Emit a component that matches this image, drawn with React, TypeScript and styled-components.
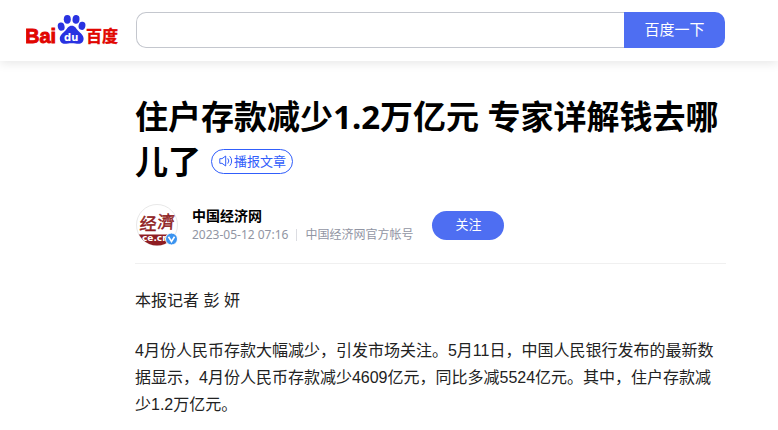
import React from "react";
import styled, { createGlobalStyle } from "styled-components";

const GlobalStyle = createGlobalStyle`
  *, *::before, *::after { box-sizing: border-box; }
  body {
    margin: 0;
    background: #fff;
    color: #222;
    font-family: "Liberation Sans", "Noto Sans CJK SC", sans-serif;
  }
`;

const Header = styled.header`
  display: flex;
  align-items: center;
  height: 61px;
  padding: 0 53px 2px 26px;
  background: #fff;
  box-shadow: 0 2px 10px rgba(0, 0, 0, 0.1);
`;

const LogoLink = styled.a`
  display: block;
  flex: none;
  width: 110px;
  height: 32px;
`;

const SearchForm = styled.form`
  display: flex;
  flex: 1;
  height: 36px;
`;

const SearchInput = styled.input`
  flex: 1;
  min-width: 0;
  padding: 0 12px;
  border: 1px solid #c4c7ce;
  border-right: 0;
  border-radius: 10px 0 0 10px;
  background: #fff;
  font: 16px "Liberation Sans", "Noto Sans CJK SC", sans-serif;
  outline: none;
`;

const SearchButton = styled.button`
  width: 101px;
  padding: 0 0 2px;
  border: 0;
  border-radius: 0 10px 10px 0;
  background: #4e6ef2;
  color: #fff;
  font: 15px "Noto Sans CJK SC", sans-serif;
`;

const Article = styled.main`
  padding: 33px 52px 0 135px;
`;

const Heading = styled.div`
  font: bold 33px/45px "Noto Sans", "Noto Sans CJK SC", sans-serif;
`;

const Title = styled.h1`
  display: inline;
  margin: 0;
  color: #000;
  font: inherit;
`;

const ListenButton = styled.button`
  display: inline-flex;
  align-items: center;
  gap: 1px;
  height: 25px;
  margin: 0 0 6px 10px;
  padding: 0 6px 1px 7px;
  border: 1px solid #315efb;
  border-radius: 13px;
  background: #fff;
  color: #315efb;
  font: 13px/22px "Noto Sans CJK SC", sans-serif;
  vertical-align: middle;
`;

const Byline = styled.section`
  display: flex;
  align-items: center;
  height: 80px;
  padding-top: 3px;
  border-bottom: 1px solid #f0f0f0;
`;

const Avatar = styled.svg`
  flex: none;
  width: 44px;
  height: 42px;
`;

const AuthorInfo = styled.div`
  margin: 0 19px 0 13px;
`;

const AuthorName = styled.a`
  display: block;
  color: #000;
  font: bold 14px/19px "Noto Sans CJK SC", sans-serif;
  text-decoration: none;
`;

const Meta = styled.div`
  display: flex;
  align-items: center;
  color: #9195a3;
  font: 12px/19px "Noto Sans", "Noto Sans CJK SC", sans-serif;
`;

const Account = styled.span`
  margin-left: 8px;
  padding-left: 8px;
  border-left: 1px solid #dcdde2;
  line-height: 12px;
`;

const FollowButton = styled.button`
  width: 72px;
  height: 29px;
  padding: 0 0 3px;
  border: 0;
  border-radius: 15px;
  background: #4e6ef2;
  color: #fff;
  font: 13px "Noto Sans CJK SC", sans-serif;
`;

const Paragraph = styled.p`
  margin: 23px 0 0;
  color: #222;
  font-size: 16px;
  line-height: 27px;
`;

const Logo = () => (
  <svg width="94" height="32" viewBox="26 13 94 32" aria-hidden="true">
    <g fill="#e10601" stroke="#e10601" fontWeight="bold">
      <text x="25" y="42" fontSize="20" fontFamily="Liberation Sans, sans-serif" strokeWidth=".9">Bai</text>
      <text x="86" y="41" fontSize="16" fontFamily="Noto Sans CJK SC, sans-serif" strokeWidth=".4">百度</text>
    </g>
    <g fill="#2932e1">
      <ellipse cx="61.2" cy="25.6" rx="3.4" ry="4.1" transform="rotate(-12 61.2 25.6)" />
      <ellipse cx="67.3" cy="18.3" rx="3.5" ry="4.4" />
      <ellipse cx="76" cy="18.3" rx="3.5" ry="4.4" transform="rotate(6 76 18.3)" />
      <ellipse cx="82" cy="24.8" rx="3.4" ry="4.1" transform="rotate(12 82 24.8)" />
      <path d="M71.700 24.800c3.400 0 4.200 2.600 6.400 5 2.300 2.400 5.500 4.100 5.500 8 0 3-2.200 5-5 5-2.400 0-4.200-.6-6.900-.6s-4.500.6-6.900.6c-2.800 0-5-2-5-5 0-3.900 3.200-5.600 5.500-8 2.200-2.400 3-5 6.400-5Z" />
    </g>
    <text x="64" y="40" fontSize="10" fontWeight="bold" fill="#fff" fontFamily="DejaVu Sans, sans-serif">du</text>
  </svg>
);

const SpeakerIcon = () => (
  <svg width="14" height="14" viewBox="0 0 14 14" fill="none" stroke="currentColor" strokeLinecap="round" strokeLinejoin="round" aria-hidden="true">
    <path d="M1.200 4.700h1.800L6.700 2v10L3 9.300H1.200Z" />
    <path d="M9 4.700a3.500 3.500 0 0 1 0 4.600M11 2.500a6.500 6.500 0 0 1 0 9" />
  </svg>
);

const AuthorAvatar = () => (
  <Avatar viewBox="0 0 44 42" role="img" aria-label="中国经济网">
    <defs>
      <clipPath id="avatar-circle"><circle cx="22" cy="21" r="20.500" /></clipPath>
    </defs>
    <circle cx="22" cy="21" r="20.500" fill="#fff" stroke="#e8e8e8" />
    <g clipPath="url(#avatar-circle)">
      <rect y="30.500" width="44" height="12" fill="#8f1d22" />
      <g fill="#8f1d22" fontFamily="Noto Sans CJK SC, sans-serif" stroke="#8f1d22" strokeWidth=".5">
        <text x="6" y="26" fontSize="17" transform="skewX(-4)">经</text>
        <text x="24" y="24" fontSize="17" transform="skewX(-4)">濟</text>
      </g>
      <text x="7" y="37" fontSize="9" fontWeight="bold" fill="#fff" fontFamily="DejaVu Sans, sans-serif">ce.cn</text>
    </g>
    <circle cx="36.500" cy="35" r="6" fill="#3b94f0" stroke="#fff" />
    <path d="m33.500 32.800 3 4.700 3-4.700" fill="none" stroke="#fff" strokeWidth="1.600" />
  </Avatar>
);

export default function App() {
  return (
    <>
      <GlobalStyle />
      <Header>
        <LogoLink href="#" aria-label="百度">
          <Logo />
        </LogoLink>
        <SearchForm role="search" onSubmit={(event) => event.preventDefault()}>
          <SearchInput type="text" aria-label="搜索" />
          <SearchButton type="submit">百度一下</SearchButton>
        </SearchForm>
      </Header>
      <Article>
        <Heading>
          <Title>住户存款减少1.2万亿元 专家详解钱去哪儿了</Title>
          <ListenButton type="button">
            <SpeakerIcon />
            播报文章
          </ListenButton>
        </Heading>
        <Byline>
          <AuthorAvatar />
          <AuthorInfo>
            <AuthorName href="#">中国经济网</AuthorName>
            <Meta>
              <time dateTime="2023-05-12T07:16">2023-05-12 07:16</time>
              <Account>中国经济网官方帐号</Account>
            </Meta>
          </AuthorInfo>
          <FollowButton type="button">关注</FollowButton>
        </Byline>
        <Paragraph>本报记者 彭 妍</Paragraph>
        <Paragraph>
          4月份人民币存款大幅减少，引发市场关注。5月11日，中国人民银行发布的最新数据显示，4月份人民币存款减少4609亿元，同比多减5524亿元。其中，住户存款减少1.2万亿元。
        </Paragraph>
      </Article>
    </>
  );
}
